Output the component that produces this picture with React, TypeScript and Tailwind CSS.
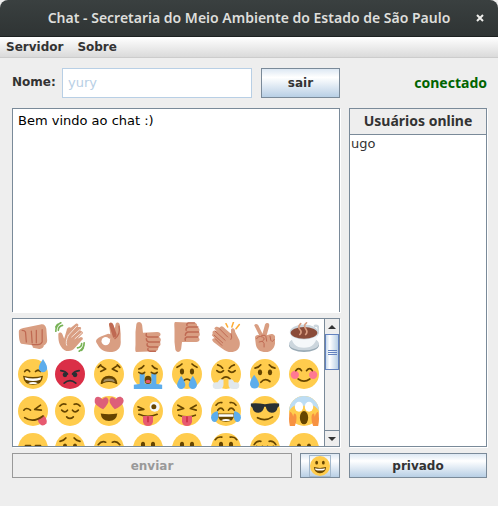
import type { ReactNode } from "react";

const BROWN = "#664500";

type EmojiItem = { label: string; art: ReactNode };

function Emoji({ children, className }: { children: ReactNode; className: string }) {
  return (
    <svg viewBox="0 0 36 36" className={className} aria-hidden="true">
      {children}
    </svg>
  );
}

function Face({ children, fill = "#FFCC4D" }: { children: ReactNode; fill?: string }) {
  return (
    <>
      <circle cx="18" cy="18" r="18" fill={fill} />
      {children}
    </>
  );
}

function Lines({ d, w = 2, color = BROWN }: { d: string; w?: number; color?: string }) {
  return <path d={d} fill="none" stroke={color} strokeWidth={w} strokeLinecap="round" strokeLinejoin="round" />;
}

function Eyes({ y = 13, rx = 2.5, ry = 3.5 }: { y?: number; rx?: number; ry?: number }) {
  return (
    <>
      <ellipse cx="12" cy={y} rx={rx} ry={ry} fill={BROWN} />
      <ellipse cx="24" cy={y} rx={rx} ry={ry} fill={BROWN} />
    </>
  );
}

const SKIN = "#D99E82";
const SKIN_DARK = "#BF6952";

const hands: EmojiItem[] = [
  {
    label: "soco",
    art: (
      <>
        <path d="M1 12C1 9 3 8 8 7L27 3C31 2 33 4 34 8L35 22C35 26 32 28 31 28C31 31 28 33 24 32L18 31L17 28L4 26C2 25 1 20 1 12Z" fill={SKIN} />
        <Lines d="M9 12L10 24M16 11L17 25M22 10L22 25M29 9L29 24Q27 28 22 27L17 27M5 10Q8 10 9 12" color={SKIN_DARK} w={1.5} />
      </>
    ),
  },
  {
    label: "aceno",
    art: (
      <>
        <path d="M4 14C5 12 8 12 9 15L11 20L14 10C14 7 17 5 19 7L25 2C28 1 29 4 27 6L29 6C32 6 32 8 30 10L32 11C34 12 34 14 32 15L27 20L31 18C34 18 34 21 32 22L24 31C19 37 11 36 7 29C4 24 4 20 4 14Z" fill={SKIN} />
        <Lines d="M16 16L26 5M20 18L30 9M24 20L32 13M16 16Q12 24 14 28" color="#F4E2D9" w={1.2} />
        <Lines d="M1 11Q1 4 7 1M4 10Q4 5 9 4M1 6L3 3M35 25Q35 32 29 35M32 26Q32 30 27 31M34 31L32 34" color="#77B255" w={2} />
      </>
    ),
  },
  {
    label: "ok",
    art: (
      <>
        <path d="M18 3C18 0 22 0 23 3L25 8L26 2C28-1 31 1 31 4L32 14L32 22C33 31 28 36 19 36C10 36 7 32 3 25C1 21 5 19 9 17L17 14C21 14 22 18 19 20L12 21C9 23 10 27 14 27C18 27 19 23 20 18Z" fill={SKIN} />
        <path d="M18 3C18 0 22 0 23 3L27 14Q28 18 23 19Z" fill={SKIN_DARK} />
        <Lines d="M30 5Q32 15 25 20" color={SKIN_DARK} w={1.5} />
        <circle cx="14" cy="23" r="5" fill="#fff" />
      </>
    ),
  },
  {
    label: "positivo",
    art: (
      <>
        <path d="M4 3C5-1 10-1 11 4L12 13L29 12C34 12 34 16 31 18C34 19 34 23 32 24C34 26 33 29 30 30C31 33 29 35 26 35L4 36C2 36 3 30 3 27L3 12Z" fill={SKIN} />
        <Lines d="M30 18L18 18Q15 17 16 14M32 24L19 24Q16 23 16 20M30 30L20 30Q16 29 17 26M27 35L20 35Q17 34 18 32" color={SKIN_DARK} w={1.7} />
      </>
    ),
  },
  {
    label: "negativo",
    art: (
      <g transform="translate(0 36) scale(1 -1)">
        <path d="M4 3C5-1 10-1 11 4L12 12L29 12C34 12 34 16 31 18C34 19 34 23 32 24C34 26 33 29 30 30C31 33 29 36 26 35L4 36C2 36 3 30 3 27L3 12Z" fill={SKIN} />
        <Lines d="M31 18L18 18Q15 17 16 14M32 24L19 24Q16 23 16 20M31 30L20 30Q16 29 17 26M27 35L20 35Q17 34 18 32" color={SKIN_DARK} w={1.7} />
      </g>
    ),
  },
  {
    label: "palmas",
    art: (
      <>
        <path d="M2 14C1 11 4 9 7 11L4 8C5 5 8 5 10 7L11 6C13 4 15 6 17 8L24 14L24 9C26 6 29 8 29 12L34 22C36 29 33 35 26 36C20 37 16 34 12 31L3 24C0 21 2 19 5 20L1 16Z" fill={SKIN} />
        <Lines d="M4 16L14 25M5 11L17 22M10 8L20 18M24 14Q26 19 24 21M5 20L13 28" color={SKIN_DARK} w={1.2} />
        <Lines d="M18 2L20 6M27 0L25 6M34 3L30 8" color="#FFAC33" w={1.8} />
      </>
    ),
  },
  {
    label: "paz",
    art: (
      <>
        <path d="M5 4C7 1 10 3 11 6L15 14L18 3C20 0 24 1 23 5L20 16L23 15C27 13 31 16 30 19L30 26C29 32 25 36 19 36C12 36 8 33 7 27L6 19C6 16 9 15 11 16Z" fill={SKIN} />
        <Lines d="M14 16L18 16M19 17L20 23M24 17L25 22Q27 25 29 21M8 20Q10 16 15 18Q19 20 15 23L11 24M15 23Q18 25 17 30" color={SKIN_DARK} w={1.2} />
      </>
    ),
  },
  {
    label: "café",
    art: (
      <>
        <ellipse cx="18" cy="28" rx="18" ry="8" fill="#99AAB5" />
        <ellipse cx="18" cy="26" rx="18" ry="8" fill="#CCD6DD" />
        <path d="M30 5C38 2 37 14 29 20" fill="none" stroke="#CCD6DD" strokeWidth="3" />
        <path d="M2 12C2 25 8 31 18 31S34 25 34 12Z" fill="#F5F8FA" />
        <ellipse cx="18" cy="12" rx="17" ry="9" fill="#CCD6DD" />
        <ellipse cx="18" cy="13" rx="16" ry="7" fill="#8A4B38" />
        <Lines d="M13 15Q16 12 13 9T14 2M20 15Q23 12 20 8T21 1" color={SKIN} w={2} />
      </>
    ),
  },
];

const faces: EmojiItem[] = [
  {
    label: "suor",
    art: (
      <Face>
        <Lines d="M8 15Q11 11 14 15M21 15Q24 12 27 15" />
        <path d="M6 20Q18 23 30 20Q29 31 18 31Q7 31 6 20Z" fill={BROWN} />
        <path d="M8 22Q18 25 28 22L27 25Q18 28 9 25ZM12 29Q18 26 24 29Q18 31 12 29Z" fill="#fff" />
        <path d="M30 0C27 5 25 7 25 11A5 5 0 0 0 35 11C35 7 32 4 30 0Z" fill="#5DADEC" />
      </Face>
    ),
  },
  {
    label: "raiva",
    art: (
      <Face fill="#DA2F47">
        <Lines d="M7 14Q13 15 15 18M29 14Q23 15 21 18M11 29Q18 23 25 29" color="#292F33" />
        <circle cx="12" cy="19" r="2.8" fill="#292F33" />
        <circle cx="24" cy="19" r="2.8" fill="#292F33" />
      </Face>
    ),
  },
  {
    label: "cansado",
    art: (
      <Face>
        <Lines d="M8 8L14 12L8 15M28 8L22 12L28 15M5 10L8 7M31 10L28 7" />
        <path d="M8 29Q9 20 18 20T28 29Q28 31 25 29Q18 26 11 29Q8 31 8 29Z" fill={BROWN} />
        <path d="M12 25Q18 22 24 25L25 28Q18 25 11 28Z" fill="#fff" opacity="0.4" />
      </Face>
    ),
  },
  {
    label: "choro alto",
    art: (
      <Face>
        <path d="M8 17H14V34Q10 33 8 30ZM22 17H28V30Q25 34 22 34Z" fill="#5DADEC" />
        <path d="M1 31Q18 28 35 31V36H1Z" fill="#5DADEC" />
        <Lines d="M7 16Q11 19 14 16M22 16Q26 19 29 16M7 12Q11 11 13 8M29 12Q25 11 23 8" />
        <ellipse cx="18" cy="25" rx="4" ry="5" fill={BROWN} />
        <ellipse cx="18" cy="27" rx="3" ry="2" fill="#E75A70" />
      </Face>
    ),
  },
  {
    label: "choro",
    art: (
      <Face>
        <Eyes y={15} />
        <Lines d="M6 10Q10 8 12 6M30 10Q26 8 24 6M14 26Q18 22 22 26" />
        <path d="M11 20Q6 28 6 31A5 5 0 0 0 16 31Q16 28 11 20ZM25 20Q20 28 20 31A5 5 0 0 0 30 31Q30 28 25 20Z" fill="#5DADEC" />
      </Face>
    ),
  },
  {
    label: "bufando",
    art: (
      <Face>
        <Lines d="M8 7Q12 8 14 11M28 7Q24 8 22 11M7 14Q11 18 15 14M21 14Q25 18 29 14M13 24Q18 19 23 24" />
        <path d="M15 25Q10 23 8 28Q2 27 2 32Q2 37 9 36Q15 36 15 31ZM21 25Q26 23 28 28Q34 27 34 32Q34 37 27 36Q21 36 21 31Z" fill="#E1E8ED" />
      </Face>
    ),
  },
  {
    label: "triste com suor",
    art: (
      <Face>
        <Eyes y={16} />
        <Lines d="M6 11Q11 10 13 7M30 11Q25 10 23 7M13 28Q18 22 24 27" />
        <path d="M5 19Q0 26 0 30A5 5 0 0 0 11 30Q10 26 5 19Z" fill="#5DADEC" />
      </Face>
    ),
  },
  {
    label: "sorriso corado",
    art: (
      <Face>
        <circle cx="7" cy="19" r="5" fill="#FF7892" />
        <circle cx="29" cy="19" r="5" fill="#FF7892" />
        <Lines d="M8 14Q12 9 15 14M21 14Q25 9 28 14M11 24Q18 29 25 24" />
      </Face>
    ),
  },
  {
    label: "delícia",
    art: (
      <Face>
        <path d="M23 27L31 23Q36 28 34 33Q29 38 25 32Z" fill="#E75A70" />
        <Lines d="M7 17Q10 13 15 17M28 17L20 16L27 11M8 26Q18 33 30 24" />
      </Face>
    ),
  },
  {
    label: "aliviado",
    art: (
      <Face>
        <Lines d="M6 12Q9 8 13 10M30 12Q27 8 23 10M8 17Q12 21 15 17M21 17Q24 21 28 17M14 25Q18 29 22 25" />
      </Face>
    ),
  },
  {
    label: "apaixonado",
    art: (
      <Face>
        <path d="M11 16Q3 12 1 8Q0 1 5 1Q8 1 10 4Q15-1 17 4Q19 8 11 16ZM25 16Q17 8 19 4Q21-1 26 4Q28 0 32 1Q37 3 35 8Q33 12 25 16Z" fill="#DD5F79" />
        <path d="M8 21Q18 23 28 21Q27 30 18 30T8 21Z" fill={BROWN} />
      </Face>
    ),
  },
  {
    label: "piscando com língua",
    art: (
      <Face>
        <circle cx="26" cy="13" r="6" fill="#F5F8FA" />
        <circle cx="25" cy="13" r="3" fill={BROWN} />
        <Lines d="M6 13L13 16L7 17M7 22Q18 27 29 22" />
        <path d="M12 24H24V31Q23 36 18 36T12 31Z" fill="#E75A70" />
        <Lines d="M18 25V31" color="#BE1931" w={1.3} />
      </Face>
    ),
  },
  {
    label: "língua",
    art: (
      <Face>
        <Lines d="M7 11L14 15L7 17M29 11L22 15L29 17M8 23Q18 27 28 23" />
        <path d="M12 24H24V31Q23 36 18 36T12 31Z" fill="#E75A70" />
        <Lines d="M18 25V31" color="#BE1931" w={1.3} />
      </Face>
    ),
  },
  {
    label: "chorando de rir",
    art: (
      <Face>
        <Lines d="M6 11Q9 7 13 8M30 11Q27 7 23 8M8 17Q12 12 15 17M21 17Q24 12 28 17" />
        <path d="M8 21H28Q28 31 18 31T8 21Z" fill={BROWN} />
        <path d="M9 22H27V25H9ZM12 29Q18 26 24 29Q18 31 12 29Z" fill="#fff" />
        <path d="M8 18Q0 20 0 26Q1 32 6 31Q10 28 8 18ZM28 18Q36 20 36 26Q35 32 30 31Q26 28 28 18Z" fill="#5DADEC" />
      </Face>
    ),
  },
  {
    label: "óculos escuros",
    art: (
      <Face>
        <path d="M1 9Q9 8 18 10Q27 8 35 9V12L33 14Q32 20 26 20Q20 20 19 13H17Q16 20 10 20Q4 20 3 14L1 12Z" fill="#292F33" />
        <Lines d="M9 26Q18 31 27 25" />
      </Face>
    ),
  },
  {
    label: "grito",
    art: (
      <Face>
        <path d="M0 18A18 18 0 0 1 36 18Q29 7 18 12Q7 7 0 18Z" fill="#BDDDF4" />
        <ellipse cx="12" cy="13" rx="5" ry="6" fill="#fff" />
        <ellipse cx="24" cy="13" rx="5" ry="6" fill="#fff" />
        <ellipse cx="18" cy="26" rx="5" ry="8" fill={BROWN} />
        <path d="M1 19Q4 20 5 25L6 21Q9 21 9 26Q9 32 7 36H1Q-1 27 1 19ZM35 19Q32 20 31 25L30 21Q27 21 27 26Q27 32 29 36H35Q37 27 35 19Z" fill="#F79242" />
      </Face>
    ),
  },
  { label: "calmo", art: <Face><Lines d="M9 15H15M21 15H27M13 26H23" /></Face> },
  { label: "preocupado", art: <Face><Lines d="M6 10Q11 9 13 6M30 10Q25 9 23 6M13 27Q18 22 23 27" /><Eyes y={16} /></Face> },
  { label: "pensativo", art: <Face><Lines d="M5 14Q9 9 14 11M31 14Q27 9 22 11M8 18Q12 21 15 18M21 18Q24 21 28 18" /></Face> },
  { label: "surpreso", art: <Face><Eyes y={14} /><circle cx="18" cy="26" r="4" fill={BROWN} /></Face> },
  { label: "neutro", art: <Face><Eyes y={14} /><Lines d="M12 25H24" /></Face> },
  { label: "angustiado", art: <Face><Lines d="M5 8Q8 4 13 5M31 8Q28 4 23 5" /><Eyes y={14} /><Lines d="M13 27Q18 22 23 27" /></Face> },
  { label: "desapontado", art: <Face><Lines d="M5 14Q8 9 13 10M31 14Q28 9 23 10M8 16Q12 20 15 16M21 16Q24 20 28 16" /></Face> },
  { label: "quieto", art: <Face><Eyes y={16} /><Lines d="M14 25H22" /></Face> },
];

const emojis = [...hands, ...faces];

const METAL = "border border-[#7a8a99] bg-linear-to-b from-[#dde8f3] via-white via-30% to-[#b8cfe5]";
const LABEL = "font-['DejaVu_Sans',sans-serif] text-[12px] leading-4 font-bold text-[#333]";
const NOTO_BOLD = "font-['Noto_Sans',sans-serif] text-[14px] leading-5 font-bold";
const BODY = "font-['DejaVu_Sans',sans-serif] text-[13px] leading-4";

function ScrollBar() {
  return (
    <div className="flex w-[15px] flex-none flex-col border-l border-[#7a8a99] bg-[#eee]">
      <button type="button" aria-label="Rolar para cima" className="flex h-[15px] flex-none items-center justify-center">
        <svg viewBox="0 0 8 4" className="h-1 w-2" aria-hidden="true"><path d="M0 4L4 0L8 4Z" fill="#333" /></svg>
      </button>
      <div className="flex h-9 flex-none flex-col items-center justify-center gap-px border border-[#6382bf] bg-linear-to-r from-[#c9dbed] via-white via-30% to-[#b8cfe5]">
        <span className="h-px w-[9px] bg-[#6382bf]" />
        <span className="h-px w-[9px] bg-[#6382bf]" />
        <span className="h-px w-[9px] bg-[#6382bf]" />
      </div>
      <div className="flex-1" />
      <button type="button" aria-label="Rolar para baixo" className="flex h-4 flex-none items-center justify-center border-t border-[#7a8a99]">
        <svg viewBox="0 0 8 4" className="h-1 w-2" aria-hidden="true"><path d="M0 0L4 4L8 0Z" fill="#333" /></svg>
      </button>
    </div>
  );
}

export default function App() {
  return (
    <div className="min-h-screen bg-[#eee]">
      <header className="flex h-[37px] items-center rounded-t-lg border-b border-[#1c2020] bg-linear-to-b from-[#3a4040] to-[#2f3434] px-3">
        <h1 className="flex-1 pl-3 text-center font-['Noto_Sans',sans-serif] text-[14px] leading-5 font-semibold text-[#dededb]">
          Chat - Secretaria do Meio Ambiente do Estado de São Paulo
        </h1>
        <button type="button" aria-label="Fechar" className="flex w-3 justify-center">
          <svg viewBox="0 0 8 8" className="size-2" aria-hidden="true">
            <path d="M1 1L7 7M7 1L1 7" stroke="#eeeeec" strokeWidth="2" />
          </svg>
        </button>
      </header>
      <nav className="flex h-[21px] items-center gap-[14px] border-b border-[#ccc] bg-linear-to-b from-white to-[#dadada] px-[6px]">
        <button type="button" className={LABEL}>Servidor</button>
        <button type="button" className={LABEL}>Sobre</button>
      </nav>

      <main className="flex gap-[9px] pt-[10px] pr-[11px] pl-3">
        <div className="flex min-w-0 flex-1 flex-col">
          <div className="flex h-[30px]">
            <label htmlFor="nome" className={`${LABEL} w-[50px] pt-[6px]`}>Nome:</label>
            <input id="nome" disabled defaultValue="yury" className={`${BODY} min-w-0 flex-1 border border-[#b8cfe5] bg-white px-[5px] text-[#b8cfe5]`} />
            <button type="button" className={`${LABEL} ${METAL} ml-[9px] w-[79px]`}>sair</button>
          </div>
          <textarea
            aria-label="Mensagens"
            readOnly
            defaultValue="Bem vindo ao chat :)"
            className={`${BODY} mt-[10px] block h-[204px] w-full resize-none border border-b-0 border-[#7a8a99] bg-white px-[5px] py-1 text-black shadow-[1px_1px_0_white] outline-none`}
          />
          <div className="mt-[6px] flex h-[129px] border border-[#7a8a99] bg-white shadow-[1px_1px_0_white]">
            <div className="min-w-0 flex-1 overflow-hidden pt-[3px] pl-[5px]">
              <div className="grid grid-cols-[37px_repeat(7,39px)] gap-y-[7px]">
                {emojis.map((e) => (
                  <button key={e.label} type="button" aria-label={e.label} className="size-[30px]">
                    <Emoji className="size-[30px]">{e.art}</Emoji>
                  </button>
                ))}
              </div>
            </div>
            <ScrollBar />
          </div>
          <div className="mt-[6px] flex h-[25px] gap-2">
            <button type="button" disabled className="flex-1 border border-[#999] font-['DejaVu_Sans',sans-serif] text-[12px] leading-4 font-bold text-[#999]">
              enviar
            </button>
            <button type="button" aria-label="Emojis" className={`${METAL} flex w-10 items-center justify-center`}>
              <span className="border border-[#a3b8cc]">
                <Emoji className="size-5">
                  <Face>
                    <Eyes y={12} />
                    <path d="M7 20Q18 23 29 20Q28 31 18 31T7 20Z" fill={BROWN} />
                    <path d="M9 22Q18 24 27 22L26 25Q18 27 10 25Z" fill="#fff" />
                  </Face>
                </Emoji>
              </span>
            </button>
          </div>
        </div>

        <aside className="flex w-[138px] flex-none flex-col">
          <p className={`${NOTO_BOLD} h-[30px] pt-[5px] text-right text-[#006400]`}>conectado</p>
          <section className="mt-[10px] flex flex-1 flex-col border border-[#7a8a99] bg-white shadow-[1px_1px_0_white]">
            <h2 className={`${NOTO_BOLD} h-[26px] border-b border-[#7a8a99] bg-[#eee] pt-[2px] text-center text-[#333]`}>
              Usuários online
            </h2>
            <ul className={`${BODY} px-px pt-px text-[#333]`}>
              <li>ugo</li>
            </ul>
          </section>
          <button type="button" className={`${LABEL} ${METAL} mt-[6px] h-[25px]`}>privado</button>
        </aside>
      </main>
    </div>
  );
}
